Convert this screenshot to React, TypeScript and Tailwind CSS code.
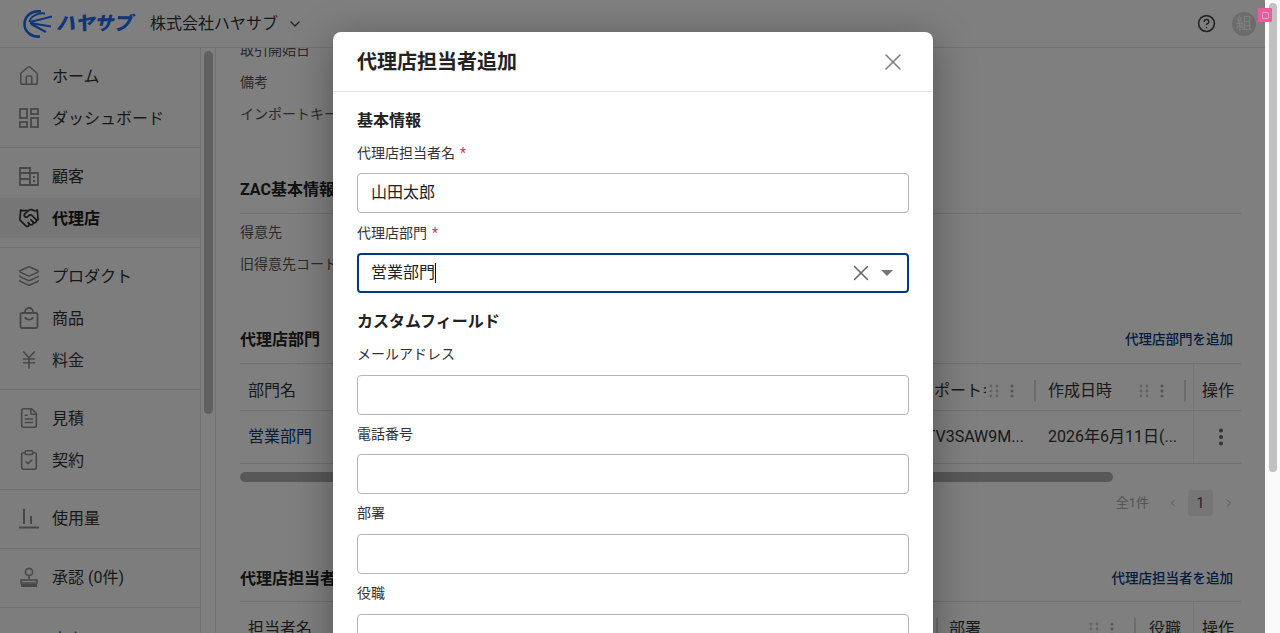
import { ChevronDown, ChevronLeft, ChevronRight, CircleHelp, Handshake, House, JapaneseYen, Layers, FileText, ClipboardCheck, TrendingUp, X } from "lucide-react";
import type { ReactNode } from "react";

const iconClass = "h-[22px] w-[22px] text-[#8f8f8f]";

function DashIcon() {
  return (
    <svg viewBox="0 0 22 22" className={iconClass} fill="none" stroke="currentColor" strokeWidth="1.8">
      <rect x="2" y="2" width="7" height="9" />
      <rect x="13" y="2" width="7" height="5" />
      <rect x="2" y="15" width="7" height="5" />
      <rect x="13" y="11" width="7" height="9" />
    </svg>
  );
}

function BuildingIcon() {
  return (
    <svg viewBox="0 0 22 22" className={iconClass} fill="none" stroke="currentColor" strokeWidth="1.8">
      <path d="M2 20V3h10v17zM12 8h8v12h-8M2 8h10M2 14h10M15 12h2M15 16h2" />
    </svg>
  );
}

function BagIcon() {
  return (
    <svg viewBox="0 0 22 22" className={iconClass} fill="none" stroke="currentColor" strokeWidth="1.8">
      <rect x="2.5" y="6" width="17" height="15" rx="1.5" />
      <path d="M7 6V5a4 4 0 018 0v1M7 10c1 3.5 7 3.5 8 0" />
    </svg>
  );
}

function UsageIcon() {
  return (
    <svg viewBox="0 0 22 22" className={iconClass} fill="none" stroke="currentColor" strokeWidth="2">
      <path d="M1 20.5h20M6 2v15M13 9v8" />
    </svg>
  );
}

function ApprovalIcon() {
  return (
    <svg viewBox="0 0 22 22" className={iconClass} fill="none" stroke="currentColor" strokeWidth="1.6">
      <circle cx="11" cy="6" r="3.6" />
      <path d="M11 10v3M3 14h16v3H3z" />
      <path d="M3 19.5h16" strokeWidth="3" />
    </svg>
  );
}

function Grip() {
  return (
    <svg viewBox="0 0 10 14" className="h-[14px] w-[10px] text-[#c4c4c4]" fill="currentColor">
      <circle cx="2" cy="2" r="1.4" />
      <circle cx="8" cy="2" r="1.4" />
      <circle cx="2" cy="7" r="1.4" />
      <circle cx="8" cy="7" r="1.4" />
      <circle cx="2" cy="12" r="1.4" />
      <circle cx="8" cy="12" r="1.4" />
    </svg>
  );
}

function Dots({ big }: { big?: boolean }) {
  return big ? (
    <svg viewBox="0 0 6 18" className="h-[18px] w-[6px] text-[#666]" fill="currentColor">
      <circle cx="3" cy="2.5" r="2" />
      <circle cx="3" cy="9" r="2" />
      <circle cx="3" cy="15.5" r="2" />
    </svg>
  ) : (
    <svg viewBox="0 0 6 14" className="h-[14px] w-[6px] text-[#b0b0b0]" fill="currentColor">
      <circle cx="3" cy="2" r="1.6" />
      <circle cx="3" cy="7" r="1.6" />
      <circle cx="3" cy="12" r="1.6" />
    </svg>
  );
}

function NavItem({ icon, label, active }: { icon: ReactNode; label: string; active?: boolean }) {
  return (
    <div className={`flex shrink-0 items-center pl-[18px] ${active ? "my-px h-10 bg-[#ececec] font-bold text-[#1a1a1a]" : "h-[42px]"}`}>
      <span className="flex w-[34px] shrink-0">{icon}</span>
      <span className="pt-[2px] text-base">{label}</span>
    </div>
  );
}

function HeadCell({ label, width, clip }: { label: string; width: string; clip?: string }) {
  return (
    <div className={`flex h-[46px] items-center justify-between pt-[7px] ${width}`}>
      <span className={`overflow-hidden whitespace-nowrap ${clip ?? ""}`}>{label}</span>
      <div className="flex items-center gap-[10px]">
        <Grip />
        <Dots />
        <span className="ml-[9px] h-[22px] w-[2px] bg-[#d8d8d8]" />
      </div>
    </div>
  );
}

function Field({ label, required, value, focused }: { label: string; required?: boolean; value?: string; focused?: boolean }) {
  return (
    <div className="flex flex-col">
      <div className="flex h-[19px] items-center text-sm text-[#333]">
        {label}
        {required && <span className="ml-[5px] text-[#d32f6f]">*</span>}
      </div>
      <div
        className={`mt-[11px] flex h-10 items-center rounded-[4px] bg-white pr-[10px] text-base text-[#222] ${
          focused ? "border-2 border-[#003a80] pl-[12px]" : "border border-[#b5b5b5] pl-[13px]"
        }`}
      >
        <span>{value}</span>
        {focused && (
          <>
            <span className="h-[20px] w-px bg-[#111]" />
            <X className="ml-auto h-[26px] w-[26px] text-[#666]" strokeWidth={1.4} />
            <span className="ml-[7px] mr-[4px] h-0 w-0 border-x-[6px] border-t-[6px] border-x-transparent border-t-[#777]" />
          </>
        )}
      </div>
    </div>
  );
}

function Section({ title, link }: { title: string; link: string }) {
  return (
    <div className="flex h-[32px] items-center justify-between">
      <span className="text-base font-bold text-[#222]">{title}</span>
      <span className="pr-[8px] text-[13.5px] font-medium text-[#003a80]">{link}</span>
    </div>
  );
}

export default function App() {
  return (
    <div className="relative flex h-[633px] w-[1280px] overflow-hidden bg-white font-['Roboto','Noto_Sans_CJK_JP',sans-serif] text-[#333]">
      <div className="flex h-full w-[1265px] flex-col">
        <header className="flex h-12 shrink-0 items-center border-b border-[#e4e4e4] pl-[23px] pr-[9px]">
          <svg viewBox="0 0 30 30" className="h-[30px] w-[30px] text-[#1c6cf0]" fill="none" stroke="currentColor">
            <path d="M18 2.5C9 1 1.5 7 1.5 15S9 28.5 17 27.5" strokeWidth="2.6" />
            <path d="M22 4.5C14 3.5 7 8 6.5 13" strokeWidth="2" />
            <path d="M7 13L29 7.5M7 14l21 3.5M8 15l15 8" strokeWidth="2.2" />
          </svg>
          <span className="ml-[3px] text-[19px] font-black italic leading-none text-[#1c6cf0]">ハヤサブ</span>
          <span className="ml-[18px] text-base text-[#333]">株式会社ハヤサブ</span>
          <ChevronDown className="ml-[9px] h-[16px] w-[16px] text-[#444]" />
          <CircleHelp className="ml-auto h-[19px] w-[19px] text-[#444]" strokeWidth={2} />
          <div className="ml-[16px] flex h-6 w-6 items-center justify-center rounded-full bg-[#d8d8d8] text-base text-white">組</div>
        </header>
        <div className="flex min-h-0 flex-1">
          <aside className="flex h-full w-[216px] shrink-0 border-r border-[#e4e4e4]">
            <nav className="flex w-[201px] shrink-0 flex-col overflow-hidden border-r border-[#e4e4e4] bg-[#fafafa] pt-[7px] text-[#333]">
              <NavItem icon={<House className={iconClass} strokeWidth={1.7} />} label="ホーム" />
              <NavItem icon={<DashIcon />} label="ダッシュボード" />
              <div className="mt-[8px] shrink-0 border-t border-[#e0e0e0] pt-[7px]">
                <NavItem icon={<BuildingIcon />} label="顧客" />
                <NavItem icon={<Handshake className="h-[22px] w-[22px] text-[#333]" strokeWidth={1.8} />} label="代理店" active />
              </div>
              <div className="mt-[8px] shrink-0 border-t border-[#e0e0e0] pt-[7px]">
                <NavItem icon={<Layers className={iconClass} strokeWidth={1.7} />} label="プロダクト" />
                <NavItem icon={<BagIcon />} label="商品" />
                <NavItem icon={<JapaneseYen className={iconClass} strokeWidth={1.7} />} label="料金" />
              </div>
              <div className="mt-[8px] shrink-0 border-t border-[#e0e0e0] pt-[7px]">
                <NavItem icon={<FileText className={iconClass} strokeWidth={1.7} />} label="見積" />
                <NavItem icon={<ClipboardCheck className={iconClass} strokeWidth={1.7} />} label="契約" />
              </div>
              <div className="mt-[8px] shrink-0 border-t border-[#e0e0e0] pb-[9px] pt-[7px]">
                <NavItem icon={<UsageIcon />} label="使用量" />
              </div>
              <div className="shrink-0 border-t border-[#e0e0e0] pb-[9px] pt-[7px]">
                <NavItem icon={<ApprovalIcon />} label="承認 (0件)" />
              </div>
              <div className="shrink-0 border-t border-[#e0e0e0] pt-[10px]">
                <NavItem icon={<TrendingUp className={iconClass} strokeWidth={1.7} />} label="売上" />
              </div>
            </nav>
            <div className="flex-1 pl-[3px] pt-[3px]">
              <div className="h-[363px] w-[9px] rounded-full bg-[#c1c1c1]" />
            </div>
          </aside>
          <main className="min-w-0 flex-1 overflow-hidden px-6 text-sm text-[#555]">
            <div className="-mt-[14px] flex h-[32px] items-center">取引開始日</div>
            <div className="flex h-[32px] items-center">備考</div>
            <div className="flex h-[32px] items-center">インポートキー</div>
            <div className="mb-[6px] mt-[43px] flex h-[34px] items-center text-base font-bold text-[#222]">ZAC基本情報</div>
            <div className="border-t border-[#e0e0e0] pt-[2px]">
              <div className="flex h-[32px] items-center">得意先</div>
              <div className="flex h-[32px] items-center">旧得意先コード</div>
            </div>
            <div className="mt-[44px]">
              <Section title="代理店部門" link="代理店部門を追加" />
            </div>
            <div className="mt-[7px] border-t border-[#e0e0e0] text-base text-[#333]">
              <div className="flex border-b border-[#e0e0e0]">
                <div className="flex h-[46px] flex-1 items-center pl-[8px] pt-[7px]">部門名</div>
                <HeadCell label="インポートキー" width="w-[147px] pl-[13px]" clip="w-[84px]" />
                <HeadCell label="作成日時" width="w-[150px] pl-[12px]" />
                <div className="w-[7px]" />
                <div className="flex h-[46px] w-[48px] items-center border-l border-[#ececec] pl-[8px] pt-[7px]">操作</div>
              </div>
              <div className="flex h-[53px] items-center border-b border-[#e0e0e0]">
                <div className="flex-1 pl-[8px] text-[#003a80]">営業部門</div>
                <div className="w-[147px] pl-[10px]">01JTV3SAW9M...</div>
                <div className="w-[150px] pl-[12px]">2026年6月11日(...</div>
                <div className="w-[7px]" />
                <div className="flex h-full w-[48px] items-center justify-center border-l border-[#ececec] pl-[6px]"><Dots big /></div>
              </div>
            </div>
            <div className="mt-[8px] h-[10px] w-[873px] rounded-full bg-[#b0b0b0]" />
            <div className="mt-[8px] flex h-[26px] items-center justify-end text-[13px] text-[#a8a8a8]">
              全1件
              <ChevronLeft className="ml-[18px] h-[12px] w-[12px]" />
              <span className="ml-[9px] flex h-[26px] w-[25px] items-center justify-center rounded-[3px] bg-[#ececec] text-sm text-[#444]">1</span>
              <ChevronRight className="ml-[10px] mr-[6px] h-[12px] w-[12px]" />
            </div>
            <div className="mt-[47px]">
              <Section title="代理店担当者" link="代理店担当者を追加" />
            </div>
            <div className="mt-[6px] flex border-t border-[#e0e0e0] text-base text-[#333]">
              <div className="flex h-[46px] flex-1 items-center justify-between pl-[8px] pt-[7px]">
                <span>担当者名</span>
                <span className="h-[22px] w-[2px] bg-[#d8d8d8]" />
              </div>
              <HeadCell label="部署" width="w-[198px] pl-[11px]" />
              <div className="flex h-[46px] w-[57px] items-center pl-[13px] pt-[7px]">役職</div>
              <div className="flex h-[46px] w-[48px] items-center border-l border-[#ececec] pl-[8px] pt-[7px]">操作</div>
            </div>
          </main>
        </div>
      </div>

      {/* page scrollbar */}
      <div className="w-[15px] shrink-0 bg-[#fafafa] pl-[4px] pt-[3px]">
        <div className="h-[469px] w-[8px] rounded-full bg-[#c1c1c1]" />
      </div>

      {/* modal backdrop, stops short of the scrollbar */}
      <div className="absolute inset-y-0 left-0 w-[1265px] bg-black/50" />

      {/* badge on top of the backdrop */}
      <div className="absolute left-[1258px] top-[8px] flex h-[14px] w-[14px] items-center justify-center rounded-[1px] bg-[#ee5a9a]">
        <span className="h-[7px] w-[7px] rounded-[1px] border border-[#f4a0c6]" />
      </div>

      <div className="absolute left-[333px] top-[32px] h-[640px] w-[600px] rounded-[8px] bg-white shadow-[0_8px_40px_rgba(0,0,0,0.35)]">
        <div className="flex h-[60px] items-center justify-between border-b border-[#e4e4e4] pl-[24px] pr-[26px]">
          <span className="text-xl font-bold text-[#222]">代理店担当者追加</span>
          <X className="h-[28px] w-[28px] text-[#808080]" strokeWidth={1.3} />
        </div>
        <div className="flex flex-col px-[24px] pt-[17px]">
          <div className="mb-[10px] flex h-[24px] items-center text-base font-bold text-[#222]">基本情報</div>
          <div className="flex flex-col gap-[10px]">
            <Field label="代理店担当者名" required value="山田太郎" />
            <Field label="代理店部門" required value="営業部門" focused />
          </div>
          <div className="mb-[10.6px] mt-[17px] flex h-[24px] items-center text-base font-bold text-[#222]">カスタムフィールド</div>
          <div className="flex flex-col gap-[9.7px]">
            <Field label="メールアドレス" />
            <Field label="電話番号" />
            <Field label="部署" />
            <Field label="役職" />
          </div>
        </div>
      </div>
    </div>
  );
}
